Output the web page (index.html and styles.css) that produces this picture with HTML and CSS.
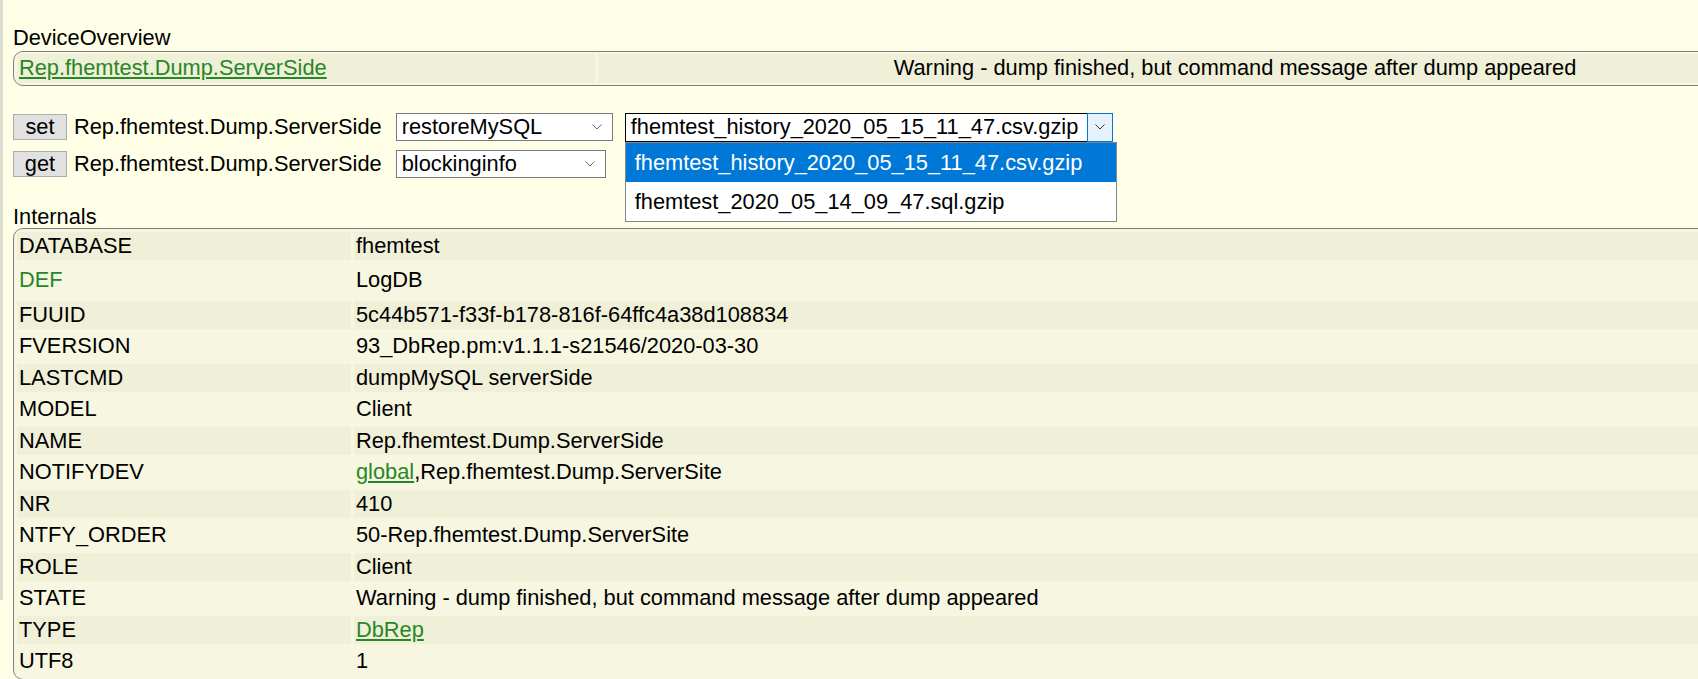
FILE: index.html
```html
<!DOCTYPE html>
<html>
<head>
<meta charset="utf-8">
<title>DeviceOverview</title>
<link rel="stylesheet" href="styles.css">
</head>
<body>
<div class="page">
  <div class="edge"></div>
  <div class="content">
    <div class="title">DeviceOverview</div>
    <table class="block overview">
      <tr class="odd">
        <td class="ov-name"><a href="#">Rep.fhemtest.Dump.ServerSide</a></td>
        <td class="ov-state">Warning - dump finished, but command message after dump appeared</td>
      </tr>
    </table>

    <div class="cmds">
      <div class="cmdrow">
        <span class="btn">set</span>
        <span class="devname">Rep.fhemtest.Dump.ServerSide</span>
        <span class="sel sel-set">restoreMySQL<svg class="chev" width="10" height="6" viewBox="0 0 10 6"><polyline points="0.5,0.5 5,5 9.5,0.5" fill="none" stroke="#6d6d6d" stroke-width="1"/></svg></span>
        <span class="sel-wrap">
          <span class="sel sel-file focus">fhemtest_history_2020_05_15_11_47.csv.gzip<span class="arrowbox"><svg class="chev" width="10" height="6" viewBox="0 0 10 6"><polyline points="0.5,0.5 5,5 9.5,0.5" fill="none" stroke="#3a3a3a" stroke-width="1"/></svg></span></span>
          <span class="dropdown">
            <span class="opt active">fhemtest_history_2020_05_15_11_47.csv.gzip</span>
            <span class="opt">fhemtest_2020_05_14_09_47.sql.gzip</span>
          </span>
        </span>
      </div>
      <div class="cmdrow">
        <span class="btn">get</span>
        <span class="devname">Rep.fhemtest.Dump.ServerSide</span>
        <span class="sel sel-get">blockinginfo<svg class="chev" width="10" height="6" viewBox="0 0 10 6"><polyline points="0.5,0.5 5,5 9.5,0.5" fill="none" stroke="#6d6d6d" stroke-width="1"/></svg></span>
      </div>
    </div>

    <div class="title title-int">Internals</div>
    <table class="block internals">
      <tr class="odd"><td class="k">DATABASE</td><td>fhemtest</td></tr>
      <tr class="even def"><td class="k"><span class="deflink">DEF</span></td><td>LogDB</td></tr>
      <tr class="odd"><td class="k">FUUID</td><td>5c44b571-f33f-b178-816f-64ffc4a38d108834</td></tr>
      <tr class="even"><td class="k">FVERSION</td><td>93_DbRep.pm:v1.1.1-s21546/2020-03-30</td></tr>
      <tr class="odd"><td class="k">LASTCMD</td><td>dumpMySQL serverSide</td></tr>
      <tr class="even"><td class="k">MODEL</td><td>Client</td></tr>
      <tr class="odd"><td class="k">NAME</td><td>Rep.fhemtest.Dump.ServerSide</td></tr>
      <tr class="even"><td class="k">NOTIFYDEV</td><td><a href="#">global</a>,Rep.fhemtest.Dump.ServerSite</td></tr>
      <tr class="odd"><td class="k">NR</td><td>410</td></tr>
      <tr class="even"><td class="k">NTFY_ORDER</td><td>50-Rep.fhemtest.Dump.ServerSite</td></tr>
      <tr class="odd"><td class="k">ROLE</td><td>Client</td></tr>
      <tr class="even"><td class="k">STATE</td><td>Warning - dump finished, but command message after dump appeared</td></tr>
      <tr class="odd"><td class="k">TYPE</td><td><a href="#">DbRep</a></td></tr>
      <tr class="even"><td class="k">UTF8</td><td>1</td></tr>
    </table>
  </div>
</div>
</body>
</html>
```

FILE: styles.css
```css
html, body {
  margin: 0;
  padding: 0;
  overflow: hidden;
  background: #FFFFE7;
}

body {
  font-family: "Liberation Sans", Arial, sans-serif;
  font-size: 21.8px;
  line-height: 24.5px;
  color: #000;
}

a {
  color: #278727;
}

.page {
  display: flex;
  align-items: flex-start;
}

.edge {
  flex: 0 0 3px;
  width: 3px;
  height: 600px;
  background: #dcdcd0;
}

.content {
  padding: 26px 0 0 10px;
  flex: 0 0 auto;
}

.title {
  height: 25px;
}

.block {
  border: 1px solid #808080;
  border-radius: 10px;
  border-spacing: 3px;
  background: #F7F7E1;
  width: 1863px;
}

.block td {
  padding: 2px 2px;
  white-space: nowrap;
}

tr.odd td {
  background: #F0F0D9;
}

tr.even td {
  background: #F7F7E1;
}

.overview {
  border-spacing: 3px 2px;
}

.ov-name {
  width: 574px;
}

.ov-state {
  text-align: center;
}

/* command rows */
.cmds {
  padding-top: 28px;
  display: flex;
  flex-direction: column;
  gap: 10px;
}

.cmdrow {
  display: flex;
  align-items: center;
  height: 27px;
}

.btn {
  box-sizing: border-box;
  width: 54px;
  height: 26px;
  border: 1px solid #adadad;
  background: #e1e1e1;
  text-align: center;
  line-height: 23px;
}

.devname {
  margin-left: 7px;
  margin-right: 14px;
}

.sel {
  position: relative;
  box-sizing: border-box;
  display: flex;
  align-items: center;
  height: 28px;
  border: 1px solid #7a7a7a;
  background: #fff;
  padding-left: 5px;
}

.sel .chev {
  position: absolute;
  right: 10px;
  top: 10px;
}

.sel-set {
  width: 217px;
}

.sel-get {
  width: 210px;
}

.sel-wrap {
  position: relative;
  margin-left: 12px;
}

.sel-file {
  width: 488px;
  height: 29px;
  border-color: #000;
}

.arrowbox {
  position: absolute;
  right: -1px;
  top: -1px;
  bottom: -1px;
  width: 26px;
  box-sizing: border-box;
  background: #e5f1fb;
  border: 1px solid #0078d7;
}

.arrowbox .chev {
  position: absolute;
  left: 7px;
  top: 10px;
}

.dropdown {
  position: absolute;
  left: 0;
  top: 29px;
  width: 492px;
  box-sizing: border-box;
  border: 1px solid #828790;
  background: #fff;
  display: flex;
  flex-direction: column;
  z-index: 5;
}

.opt {
  height: 39px;
  line-height: 39px;
  padding-left: 9px;
}

.opt.active {
  background: #0078d7;
  color: #fff;
}

.title-int {
  margin-top: 27px;
  height: 23px;
}

.internals td.k {
  width: 330px;
}

.internals td {
  height: 24.5px;
}

.internals tr.def td {
  padding-top: 5px;
  padding-bottom: 5px;
}

.deflink {
  color: #278727;
}
```
